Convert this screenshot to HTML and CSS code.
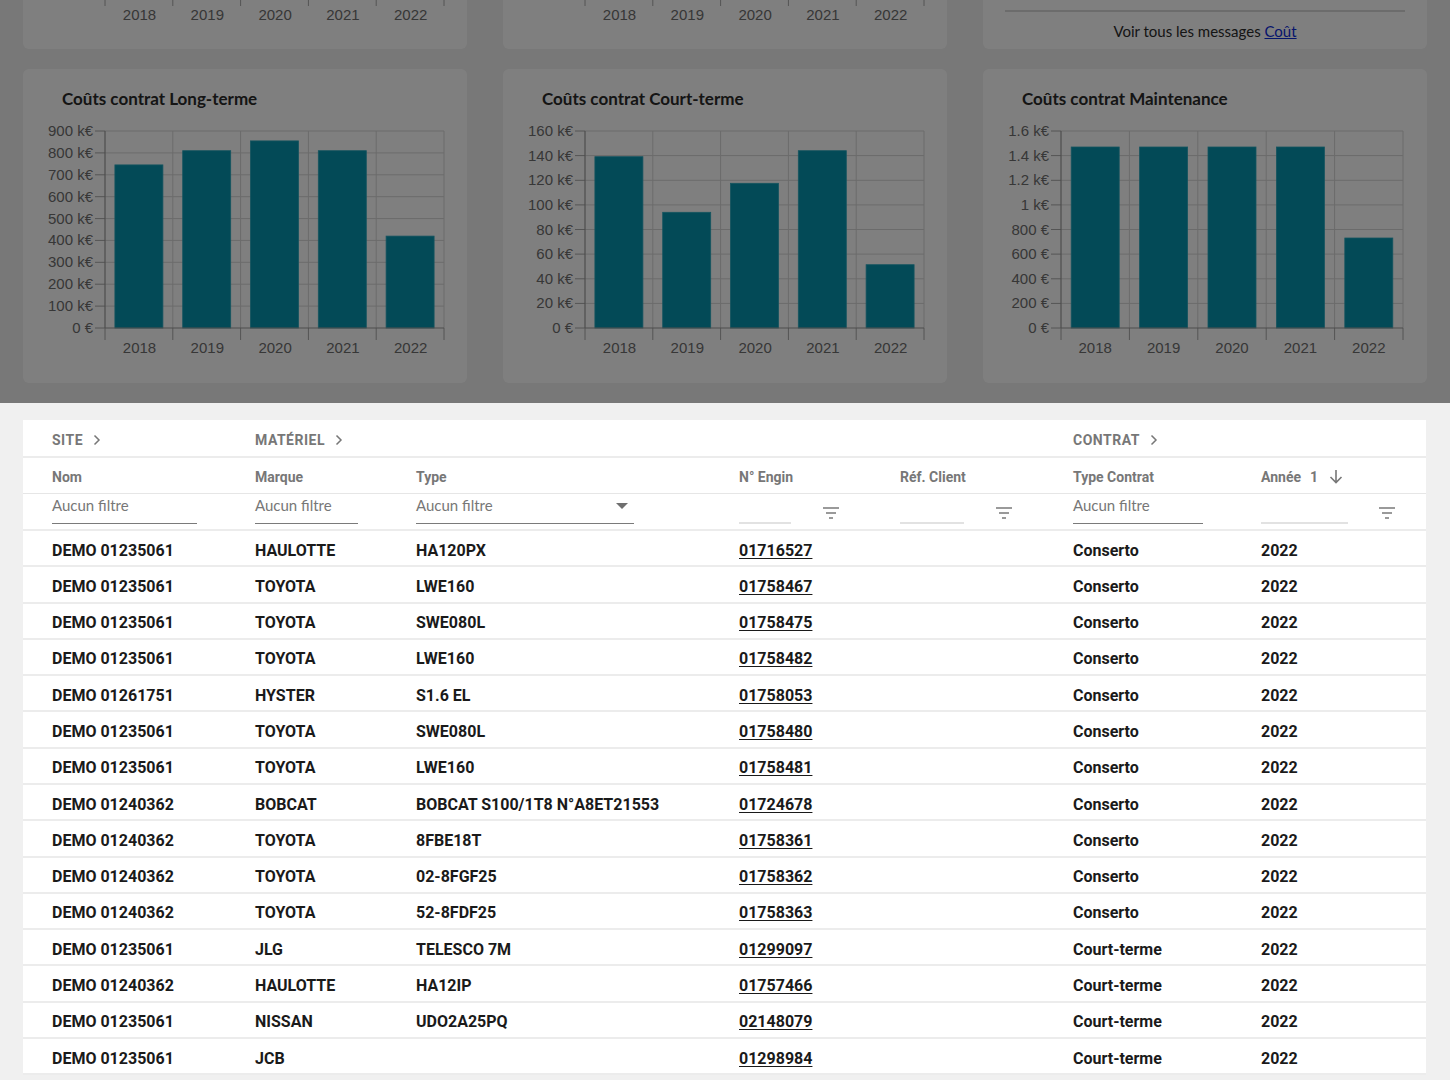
FILE: index.html
```html
<!DOCTYPE html>
<html lang="fr">
<head>
<meta charset="utf-8">
<title>Coûts</title>
<link rel="stylesheet" href="styles.css">
</head>
<body>
<section class="dash">
  <div class="cards top-row">
    <div class="card card-stub">
      <svg class="stub-svg" width="444" height="49" viewBox="0 0 444 49">
        <g class="tick"><line x1="82" y1="0" x2="82" y2="6"/><line x1="149.8" y1="0" x2="149.8" y2="6"/><line x1="217.6" y1="0" x2="217.6" y2="6"/><line x1="285.4" y1="0" x2="285.4" y2="6"/><line x1="353.2" y1="0" x2="353.2" y2="6"/><line x1="421" y1="0" x2="421" y2="6"/></g>
        <g class="xl"><text x="116.5" y="20">2018</text><text x="184.3" y="20">2019</text><text x="252.1" y="20">2020</text><text x="319.9" y="20">2021</text><text x="387.7" y="20">2022</text></g>
      </svg>
    </div>
    <div class="card card-stub">
      <svg class="stub-svg" width="444" height="49" viewBox="0 0 444 49">
        <g class="tick"><line x1="82" y1="0" x2="82" y2="6"/><line x1="149.8" y1="0" x2="149.8" y2="6"/><line x1="217.6" y1="0" x2="217.6" y2="6"/><line x1="285.4" y1="0" x2="285.4" y2="6"/><line x1="353.2" y1="0" x2="353.2" y2="6"/><line x1="421" y1="0" x2="421" y2="6"/></g>
        <g class="xl"><text x="116.5" y="20">2018</text><text x="184.3" y="20">2019</text><text x="252.1" y="20">2020</text><text x="319.9" y="20">2021</text><text x="387.7" y="20">2022</text></g>
      </svg>
    </div>
    <div class="card card-stub card-msg">
      <div class="msg-rule"></div>
      <p class="msg">Voir tous les messages <a href="#">Coût</a></p>
    </div>
  </div>

  <div class="cards chart-row">
    <div class="card chart-card">
      <h2 class="chart-title">Coûts contrat Long-terme</h2>
      <svg class="chart" width="444" height="264" viewBox="0 0 444 264">
        <g class="grid">
          <line x1="82" y1="12" x2="421" y2="12"/><line x1="82" y1="33.9" x2="421" y2="33.9"/><line x1="82" y1="55.8" x2="421" y2="55.8"/><line x1="82" y1="77.7" x2="421" y2="77.7"/><line x1="82" y1="99.6" x2="421" y2="99.6"/><line x1="82" y1="121.4" x2="421" y2="121.4"/><line x1="82" y1="143.3" x2="421" y2="143.3"/><line x1="82" y1="165.2" x2="421" y2="165.2"/><line x1="82" y1="187.1" x2="421" y2="187.1"/>
          <line x1="149.8" y1="12" x2="149.8" y2="209"/><line x1="217.6" y1="12" x2="217.6" y2="209"/><line x1="285.4" y1="12" x2="285.4" y2="209"/><line x1="353.2" y1="12" x2="353.2" y2="209"/><line x1="421" y1="12" x2="421" y2="209"/>
        </g>
        <g class="tick">
          <line x1="72" y1="12" x2="82" y2="12"/><line x1="72" y1="33.9" x2="82" y2="33.9"/><line x1="72" y1="55.8" x2="82" y2="55.8"/><line x1="72" y1="77.7" x2="82" y2="77.7"/><line x1="72" y1="99.6" x2="82" y2="99.6"/><line x1="72" y1="121.4" x2="82" y2="121.4"/><line x1="72" y1="143.3" x2="82" y2="143.3"/><line x1="72" y1="165.2" x2="82" y2="165.2"/><line x1="72" y1="187.1" x2="82" y2="187.1"/><line x1="72" y1="209" x2="82" y2="209"/>
          <line x1="82" y1="209" x2="82" y2="221"/><line x1="149.8" y1="209" x2="149.8" y2="221"/><line x1="217.6" y1="209" x2="217.6" y2="221"/><line x1="285.4" y1="209" x2="285.4" y2="221"/><line x1="353.2" y1="209" x2="353.2" y2="221"/><line x1="421" y1="209" x2="421" y2="221"/>
        </g>
        <g class="bars">
          <rect x="91.9" y="45.9" width="48" height="163.1"/><rect x="159.7" y="31.7" width="48" height="177.3"/><rect x="227.5" y="21.9" width="48" height="187.1"/><rect x="295.3" y="31.7" width="48" height="177.3"/><rect x="363.1" y="117.1" width="48" height="91.9"/>
        </g>
        <g class="axis"><line x1="82" y1="12" x2="82" y2="209"/><line x1="82" y1="209" x2="421" y2="209"/></g>
        <g class="yl">
          <text x="70" y="17">900 k€</text><text x="70" y="38.9">800 k€</text><text x="70" y="60.8">700 k€</text><text x="70" y="82.7">600 k€</text><text x="70" y="104.6">500 k€</text><text x="70" y="126.4">400 k€</text><text x="70" y="148.3">300 k€</text><text x="70" y="170.2">200 k€</text><text x="70" y="192.1">100 k€</text><text x="70" y="214">0 €</text>
        </g>
        <g class="xl"><text x="116.5" y="234">2018</text><text x="184.3" y="234">2019</text><text x="252.1" y="234">2020</text><text x="319.9" y="234">2021</text><text x="387.7" y="234">2022</text></g>
      </svg>
    </div>

    <div class="card chart-card">
      <h2 class="chart-title">Coûts contrat Court-terme</h2>
      <svg class="chart" width="444" height="264" viewBox="0 0 444 264">
        <g class="grid">
          <line x1="82" y1="12" x2="421" y2="12"/><line x1="82" y1="36.6" x2="421" y2="36.6"/><line x1="82" y1="61.3" x2="421" y2="61.3"/><line x1="82" y1="85.9" x2="421" y2="85.9"/><line x1="82" y1="110.5" x2="421" y2="110.5"/><line x1="82" y1="135.1" x2="421" y2="135.1"/><line x1="82" y1="159.8" x2="421" y2="159.8"/><line x1="82" y1="184.4" x2="421" y2="184.4"/>
          <line x1="149.8" y1="12" x2="149.8" y2="209"/><line x1="217.6" y1="12" x2="217.6" y2="209"/><line x1="285.4" y1="12" x2="285.4" y2="209"/><line x1="353.2" y1="12" x2="353.2" y2="209"/><line x1="421" y1="12" x2="421" y2="209"/>
        </g>
        <g class="tick">
          <line x1="72" y1="12" x2="82" y2="12"/><line x1="72" y1="36.6" x2="82" y2="36.6"/><line x1="72" y1="61.3" x2="82" y2="61.3"/><line x1="72" y1="85.9" x2="82" y2="85.9"/><line x1="72" y1="110.5" x2="82" y2="110.5"/><line x1="72" y1="135.1" x2="82" y2="135.1"/><line x1="72" y1="159.8" x2="82" y2="159.8"/><line x1="72" y1="184.4" x2="82" y2="184.4"/><line x1="72" y1="209" x2="82" y2="209"/>
          <line x1="82" y1="209" x2="82" y2="221"/><line x1="149.8" y1="209" x2="149.8" y2="221"/><line x1="217.6" y1="209" x2="217.6" y2="221"/><line x1="285.4" y1="209" x2="285.4" y2="221"/><line x1="353.2" y1="209" x2="353.2" y2="221"/><line x1="421" y1="209" x2="421" y2="221"/>
        </g>
        <g class="bars">
          <rect x="91.9" y="37.7" width="48" height="171.3"/><rect x="159.7" y="93.3" width="48" height="115.7"/><rect x="227.5" y="64.3" width="48" height="144.7"/><rect x="295.3" y="31.7" width="48" height="177.3"/><rect x="363.1" y="145.7" width="48" height="63.3"/>
        </g>
        <g class="axis"><line x1="82" y1="12" x2="82" y2="209"/><line x1="82" y1="209" x2="421" y2="209"/></g>
        <g class="yl">
          <text x="70" y="17">160 k€</text><text x="70" y="41.6">140 k€</text><text x="70" y="66.3">120 k€</text><text x="70" y="90.9">100 k€</text><text x="70" y="115.5">80 k€</text><text x="70" y="140.1">60 k€</text><text x="70" y="164.8">40 k€</text><text x="70" y="189.4">20 k€</text><text x="70" y="214">0 €</text>
        </g>
        <g class="xl"><text x="116.5" y="234">2018</text><text x="184.3" y="234">2019</text><text x="252.1" y="234">2020</text><text x="319.9" y="234">2021</text><text x="387.7" y="234">2022</text></g>
      </svg>
    </div>

    <div class="card chart-card">
      <h2 class="chart-title">Coûts contrat Maintenance</h2>
      <svg class="chart" width="444" height="264" viewBox="0 0 444 264">
        <g class="grid">
          <line x1="78" y1="12" x2="420" y2="12"/><line x1="78" y1="36.6" x2="420" y2="36.6"/><line x1="78" y1="61.3" x2="420" y2="61.3"/><line x1="78" y1="85.9" x2="420" y2="85.9"/><line x1="78" y1="110.5" x2="420" y2="110.5"/><line x1="78" y1="135.1" x2="420" y2="135.1"/><line x1="78" y1="159.8" x2="420" y2="159.8"/><line x1="78" y1="184.4" x2="420" y2="184.4"/>
          <line x1="146.4" y1="12" x2="146.4" y2="209"/><line x1="214.8" y1="12" x2="214.8" y2="209"/><line x1="283.2" y1="12" x2="283.2" y2="209"/><line x1="351.6" y1="12" x2="351.6" y2="209"/><line x1="420" y1="12" x2="420" y2="209"/>
        </g>
        <g class="tick">
          <line x1="68" y1="12" x2="78" y2="12"/><line x1="68" y1="36.6" x2="78" y2="36.6"/><line x1="68" y1="61.3" x2="78" y2="61.3"/><line x1="68" y1="85.9" x2="78" y2="85.9"/><line x1="68" y1="110.5" x2="78" y2="110.5"/><line x1="68" y1="135.1" x2="78" y2="135.1"/><line x1="68" y1="159.8" x2="78" y2="159.8"/><line x1="68" y1="184.4" x2="78" y2="184.4"/><line x1="68" y1="209" x2="78" y2="209"/>
          <line x1="78" y1="209" x2="78" y2="221"/><line x1="146.4" y1="209" x2="146.4" y2="221"/><line x1="214.8" y1="209" x2="214.8" y2="221"/><line x1="283.2" y1="209" x2="283.2" y2="221"/><line x1="351.6" y1="209" x2="351.6" y2="221"/><line x1="420" y1="209" x2="420" y2="221"/>
        </g>
        <g class="bars">
          <rect x="88.2" y="28" width="48" height="181"/><rect x="156.6" y="28" width="48" height="181"/><rect x="225" y="28" width="48" height="181"/><rect x="293.4" y="28" width="48" height="181"/><rect x="361.8" y="119" width="48" height="90"/>
        </g>
        <g class="axis"><line x1="78" y1="12" x2="78" y2="209"/><line x1="78" y1="209" x2="420" y2="209"/></g>
        <g class="yl">
          <text x="66" y="17">1.6 k€</text><text x="66" y="41.6">1.4 k€</text><text x="66" y="66.3">1.2 k€</text><text x="66" y="90.9">1 k€</text><text x="66" y="115.5">800 €</text><text x="66" y="140.1">600 €</text><text x="66" y="164.8">400 €</text><text x="66" y="189.4">200 €</text><text x="66" y="214">0 €</text>
        </g>
        <g class="xl"><text x="112.2" y="234">2018</text><text x="180.6" y="234">2019</text><text x="249" y="234">2020</text><text x="317.4" y="234">2021</text><text x="385.8" y="234">2022</text></g>
      </svg>
    </div>
  </div>
</section>

<section class="table-card">
  <div class="trow group-row">
    <div class="group">SITE <svg class="chev" width="8" height="12" viewBox="0 0 8 12"><path d="M1.5 1.5 L6 6 L1.5 10.5"/></svg></div>
    <div class="group span3">MATÉRIEL <svg class="chev" width="8" height="12" viewBox="0 0 8 12"><path d="M1.5 1.5 L6 6 L1.5 10.5"/></svg></div>
    <div class="group span2 col-contrat">CONTRAT <svg class="chev" width="8" height="12" viewBox="0 0 8 12"><path d="M1.5 1.5 L6 6 L1.5 10.5"/></svg></div>
  </div>
  <div class="trow head-row">
    <div>Nom</div><div>Marque</div><div>Type</div><div>N° Engin</div><div>Réf. Client</div><div>Type Contrat</div>
    <div class="sort">Année <span class="sort-num">1</span>
      <svg class="arrow" width="14" height="15" viewBox="0 0 14 15"><path d="M7 1 V13.5 M1.5 8 L7 13.5 L12.5 8"/></svg>
    </div>
  </div>
  <div class="trow filter-row">
    <div><span class="inp w145">Aucun filtre</span></div>
    <div><span class="inp w103">Aucun filtre</span></div>
    <div><span class="inp w218 select">Aucun filtre<svg class="caret" width="12" height="6" viewBox="0 0 12 6"><path d="M0 0 H12 L6 6 Z"/></svg></span></div>
    <div class="num-filter"><span class="inp empty w52"></span><svg class="flt" width="16" height="12" viewBox="0 0 16 12"><path d="M0 1 H16 M3 6 H13 M6 11 H10"/></svg></div>
    <div class="num-filter"><span class="inp empty w64"></span><svg class="flt f32" width="16" height="12" viewBox="0 0 16 12"><path d="M0 1 H16 M3 6 H13 M6 11 H10"/></svg></div>
    <div><span class="inp w130">Aucun filtre</span></div>
    <div class="num-filter"><span class="inp empty w87"></span><svg class="flt f31" width="16" height="12" viewBox="0 0 16 12"><path d="M0 1 H16 M3 6 H13 M6 11 H10"/></svg></div>
  </div>

  <div class="trow data"><div>DEMO 01235061</div><div>HAULOTTE</div><div>HA120PX</div><div><a href="#">01716527</a></div><div></div><div>Conserto</div><div>2022</div></div>
  <div class="trow data"><div>DEMO 01235061</div><div>TOYOTA</div><div>LWE160</div><div><a href="#">01758467</a></div><div></div><div>Conserto</div><div>2022</div></div>
  <div class="trow data"><div>DEMO 01235061</div><div>TOYOTA</div><div>SWE080L</div><div><a href="#">01758475</a></div><div></div><div>Conserto</div><div>2022</div></div>
  <div class="trow data"><div>DEMO 01235061</div><div>TOYOTA</div><div>LWE160</div><div><a href="#">01758482</a></div><div></div><div>Conserto</div><div>2022</div></div>
  <div class="trow data"><div>DEMO 01261751</div><div>HYSTER</div><div>S1.6 EL</div><div><a href="#">01758053</a></div><div></div><div>Conserto</div><div>2022</div></div>
  <div class="trow data"><div>DEMO 01235061</div><div>TOYOTA</div><div>SWE080L</div><div><a href="#">01758480</a></div><div></div><div>Conserto</div><div>2022</div></div>
  <div class="trow data"><div>DEMO 01235061</div><div>TOYOTA</div><div>LWE160</div><div><a href="#">01758481</a></div><div></div><div>Conserto</div><div>2022</div></div>
  <div class="trow data"><div>DEMO 01240362</div><div>BOBCAT</div><div>BOBCAT S100/1T8 N°A8ET21553</div><div><a href="#">01724678</a></div><div></div><div>Conserto</div><div>2022</div></div>
  <div class="trow data"><div>DEMO 01240362</div><div>TOYOTA</div><div>8FBE18T</div><div><a href="#">01758361</a></div><div></div><div>Conserto</div><div>2022</div></div>
  <div class="trow data"><div>DEMO 01240362</div><div>TOYOTA</div><div>02-8FGF25</div><div><a href="#">01758362</a></div><div></div><div>Conserto</div><div>2022</div></div>
  <div class="trow data"><div>DEMO 01240362</div><div>TOYOTA</div><div>52-8FDF25</div><div><a href="#">01758363</a></div><div></div><div>Conserto</div><div>2022</div></div>
  <div class="trow data"><div>DEMO 01235061</div><div>JLG</div><div>TELESCO 7M</div><div><a href="#">01299097</a></div><div></div><div>Court-terme</div><div>2022</div></div>
  <div class="trow data"><div>DEMO 01240362</div><div>HAULOTTE</div><div>HA12IP</div><div><a href="#">01757466</a></div><div></div><div>Court-terme</div><div>2022</div></div>
  <div class="trow data"><div>DEMO 01235061</div><div>NISSAN</div><div>UDO2A25PQ</div><div><a href="#">02148079</a></div><div></div><div>Court-terme</div><div>2022</div></div>
  <div class="trow data"><div>DEMO 01235061</div><div>JCB</div><div></div><div><a href="#">01298984</a></div><div></div><div>Court-terme</div><div>2022</div></div>
</section>
</body>
</html>
```

FILE: styles.css
```css
* { box-sizing: border-box; }
html, body { margin: 0; padding: 0; }
body {
  background: #f0f0f0;
  font-family: Roboto, "Liberation Sans", Arial, sans-serif;
  width: 1450px;
  height: 1080px;
  overflow: hidden;
}

/* ---------- dashboard (dimmed by backdrop) ---------- */
.dash {
  position: relative;
  padding: 0 0 20px 23px;
}
.dash::after {
  content: "";
  position: absolute;
  inset: 0;
  background: rgba(0, 0, 0, 0.5);
}
.cards {
  display: grid;
  grid-template-columns: 444px 444px 444px;
  column-gap: 36px;
}
.card {
  background: #ffffff;
  border-radius: 6px;
}
.top-row .card { height: 49px; border-radius: 0 0 6px 6px; }
.stub-svg { display: block; }
.card-msg {
  padding: 10px 22px 0 22px;
}
.msg-rule { height: 2px; background: #d8d8d8; }
.msg {
  margin: 10px 0 0 0;
  text-align: center;
  font-family: Lato, "Noto Sans", sans-serif;
  font-size: 15px;
  line-height: 18px;
  color: #2b2b2b;
}
.msg a { color: #0b2bd9; text-decoration: underline; }

.chart-row { margin-top: 20px; }
.chart-card { height: 314px; padding-top: 20px; }
.chart-title {
  margin: 0 0 10px 39px;
  font-family: Lato, "Noto Sans", sans-serif;
  font-weight: 700;
  font-size: 17px;
  line-height: 20px;
  color: #2a2a2a;
}
.chart { display: block; }
.grid line { stroke: #d6d6d6; stroke-width: 1; }
.tick line { stroke: #a8a8a8; stroke-width: 1; }
.axis line { stroke: #9a9a9a; stroke-width: 1.2; }
.bars rect { fill: #0694ae; stroke: #2aa8bf; stroke-width: 0.8; }
.yl text, .xl text {
  font-family: "Liberation Sans", Arial, sans-serif;
  font-size: 15px;
  fill: #6e6e6e;
}
.yl text { text-anchor: end; }
.xl text { text-anchor: middle; }

/* ---------- table ---------- */
.table-card {
  background: #ffffff;
  margin: 17px 24px 0 23px;
}
.trow {
  display: grid;
  grid-template-columns: 203px 161px 323px 161px 173px 188px 1fr;
  padding-left: 29px;
  align-items: center;
}
.group-row {
  height: 38px;
  padding-top: 3px;
  border-bottom: 2px solid #ececec;
}
.group {
  font-size: 14px;
  font-weight: 700;
  letter-spacing: 0.5px;
  color: #777777;
  display: flex;
  align-items: center;
  gap: 10px;
}
.span3 { grid-column: 2 / span 4; }
.col-contrat { grid-column: 6 / span 2; }
.chev path { fill: none; stroke: #777; stroke-width: 1.5; }

.head-row {
  height: 36px;
  padding-top: 2px;
  border-bottom: 1px solid #e6e6e6;
  font-size: 14px;
  font-weight: 700;
  color: #777777;
}
.sort { display: flex; align-items: center; }
.sort-num { margin-left: 9px; }
.arrow { margin-left: 11px; }
.arrow path { fill: none; stroke: #777; stroke-width: 1.6; }

.filter-row {
  height: 37px;
  border-bottom: 2px solid #ececec;
  align-items: start;
  padding-top: 1px;
}
.inp {
  display: flex;
  align-items: flex-start;
  justify-content: space-between;
  height: 29px;
  border-bottom: 1px solid #7a7a7a;
  font-family: Lato, "Noto Sans", sans-serif;
  font-size: 15px;
  line-height: 20px;
  color: #777777;
}
.inp.empty { border-bottom: 2px solid #e2e2e2; }
.w145 { width: 145px; }
.w103 { width: 103px; }
.w218 { width: 218px; }
.w130 { width: 130px; }
.w52 { width: 52px; }
.w64 { width: 64px; }
.w87 { width: 87px; }
.caret { margin: 8px 6px 0 0; }
.caret path { fill: #6f6f6f; }
.num-filter { display: flex; align-items: flex-start; }
.flt { margin: 12px 0 0 32px; }
.flt.f32 { margin-left: 32px; }
.flt.f31 { margin-left: 31px; }
.flt path { fill: none; stroke: #7a7a7a; stroke-width: 1.5; }

.data {
  height: 36.29px;
  padding-top: 4px;
  border-bottom: 2px solid #ececec;
  font-size: 16px;
  font-weight: 700;
  color: #1a1a1a;
  white-space: nowrap;
}
.data a { color: #1a1a1a; text-decoration: underline; text-underline-offset: 2px; }
```
